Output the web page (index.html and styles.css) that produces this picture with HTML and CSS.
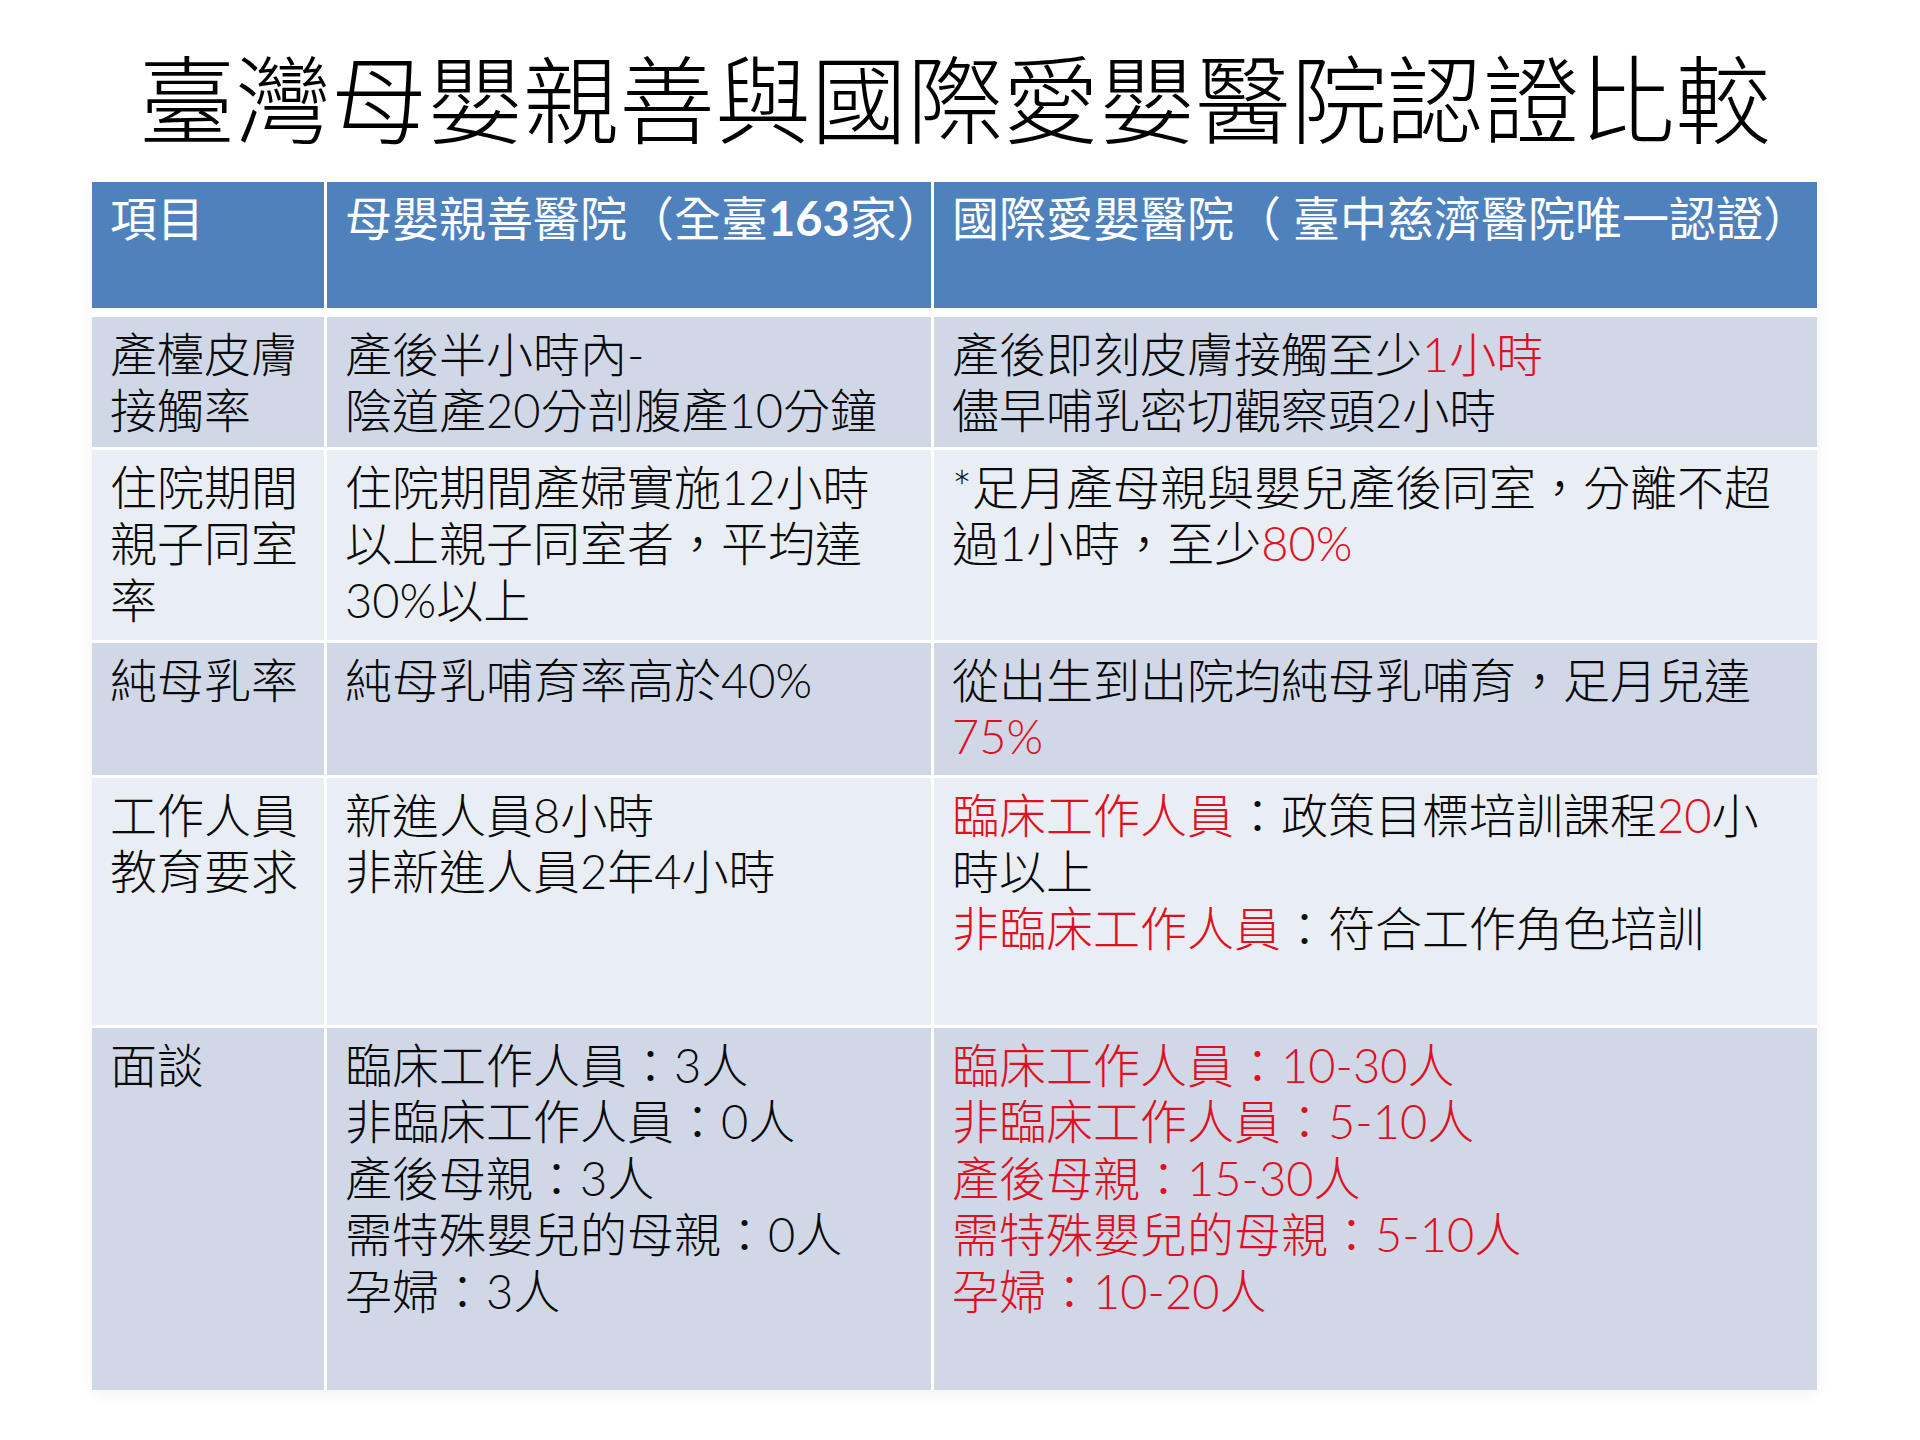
FILE: index.html
```html
<!DOCTYPE html>
<html lang="zh-Hant">
<head>
<meta charset="utf-8">
<title>臺灣母嬰親善與國際愛嬰醫院認證比較</title>
<link rel="stylesheet" href="styles.css">
</head>
<body>
<div class="slide">
  <h1 class="title">臺灣母嬰親善與國際愛嬰醫院認證比較</h1>
  <div class="table">
    <div class="cell head">項目</div>
    <div class="cell head">母嬰親善醫院（全臺<b class="num">163</b>家）</div>
    <div class="cell head">國際愛嬰醫院（ 臺中慈濟醫院唯一認證）</div>

    <div class="cell odd">產檯皮膚<br>接觸率</div>
    <div class="cell odd">產後半小時內-<br>陰道產20分剖腹產10分鐘</div>
    <div class="cell odd">產後即刻皮膚接觸至少<span class="red">1小時</span><br>儘早哺乳密切觀察頭2小時</div>

    <div class="cell even">住院期間<br>親子同室<br>率</div>
    <div class="cell even">住院期間產婦實施12小時<br>以上親子同室者，平均達<br>30%以上</div>
    <div class="cell even">*足月產母親與嬰兒產後同室，分離不超<br>過1小時，至少<span class="red">80%</span></div>

    <div class="cell odd">純母乳率</div>
    <div class="cell odd">純母乳哺育率高於40%</div>
    <div class="cell odd">從出生到出院均純母乳哺育，足月兒達<br><span class="red">75%</span></div>

    <div class="cell even">工作人員<br>教育要求</div>
    <div class="cell even">新進人員8小時<br>非新進人員2年4小時</div>
    <div class="cell even"><span class="red">臨床工作人員</span>：政策目標培訓課程<span class="red">20</span>小<br>時以上<br><span class="red">非臨床工作人員</span>：符合工作角色培訓</div>

    <div class="cell odd">面談</div>
    <div class="cell odd">臨床工作人員：3人<br>非臨床工作人員：0人<br>產後母親：3人<br>需特殊嬰兒的母親：0人<br>孕婦：3人</div>
    <div class="cell odd red">臨床工作人員：10-30人<br>非臨床工作人員：5-10人<br>產後母親：15-30人<br>需特殊嬰兒的母親：5-10人<br>孕婦：10-20人</div>
  </div>
</div>
</body>
</html>
```

FILE: styles.css
```css
html, body {
  margin: 0;
  padding: 0;
  background: #ffffff;
}

.slide {
  width: 1920px;
  height: 1440px;
  background: #ffffff;
  color: #000000;
}

.title {
  margin: 0;
  padding-top: 37px;
  height: 115px;
  margin-bottom: 30px;
  text-align: center;
  font-family: "Noto Sans CJK TC", "Noto Sans CJK SC", sans-serif;
  font-weight: 300;
  font-size: 96px;
  line-height: 1.2;
  color: #000000;
  padding-right: 10px;
}

.table {
  margin-left: 92px;
  width: 1725px;
  display: grid;
  grid-template-columns: 232px 604px 883px;
  grid-template-rows: 132px 130px 190px 132px 247px 362px;
  column-gap: 3px;
  row-gap: 3px;
  background: #ffffff;
  box-shadow: 0 4px 16px rgba(0, 0, 0, 0.05);
}

.cell {
  padding: 9px 0 0 18px;
  font-family: "Lato", "Noto Sans CJK TC", "Noto Sans CJK SC", sans-serif;
  font-weight: 300;
  font-size: 47px;
  line-height: 1.2;
  white-space: nowrap;
  color: #0a0a0a;
}

.head {
  background: #4f81bd;
  color: #ffffff;
  margin-bottom: 6px;
  padding-top: 8px;
  font-weight: 400;
}

.num {
  font-weight: 700;
}

.odd {
  background: #d0d8e8;
}

.even {
  background: #e9edf4;
}

.red {
  color: #e01020;
}
```
